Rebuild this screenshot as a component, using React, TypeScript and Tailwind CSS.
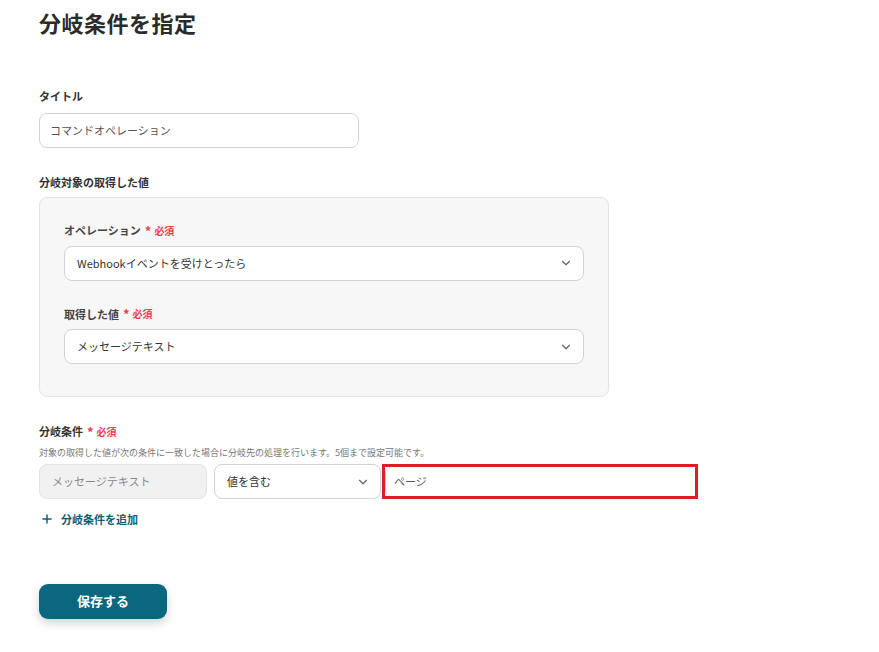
import { ChevronDown, Plus } from 'lucide-react';

const font = { fontFamily: '"Noto Sans CJK JP", "Noto Sans", sans-serif' };

function Required() {
  return (
    <span className="ml-1 inline-flex items-center text-[10px] font-bold text-[#e8414d]">
      <span className="mr-[3px] text-[13px] leading-none">*</span>必須
    </span>
  );
}

function SelectBox({ value, className }: { value: string; className?: string }) {
  return (
    <div
      className={`flex h-[35px] items-center justify-between rounded-[8px] border border-[#cfd3d8] bg-white pl-[12px] pr-[10px] text-[11px] text-[#333] ${className ?? ''}`}
    >
      <span>{value}</span>
      <ChevronDown size={14} strokeWidth={2} className="text-[#666]" />
    </div>
  );
}

export default function App() {
  return (
    <div style={font} className="min-h-[652px] w-[879px] bg-white pl-[39px] pt-[6px] text-[#333]">
      <h1 className="text-[22px] font-bold leading-[32px] tracking-[0.5px] text-[#2b2b2b]">分岐条件を指定</h1>

      <div className="mt-[50px] text-[11px] font-bold">タイトル</div>
      <div className="mt-[8px] flex h-[35px] w-[320px] items-center rounded-[8px] border border-[#cfd3d8] pl-[10px] text-[11px] text-[#555]">
        コマンドオペレーション
      </div>

      <div className="mt-[26px] text-[11px] font-bold">分岐対象の取得した値</div>
      <div className="mt-[7px] w-[570px] rounded-[8px] border border-[#e3e3e3] bg-[#f7f7f7] px-[24px] pb-[32px] pt-[24px]">
        <div className="flex items-center text-[11px] font-bold text-[#444]">
          オペレーション
          <Required />
        </div>
        <SelectBox value="Webhookイベントを受けとったら" className="mt-[7px]" />
        <div className="mt-[25px] flex items-center text-[11px] font-bold text-[#444]">
          取得した値
          <Required />
        </div>
        <SelectBox value="メッセージテキスト" className="mt-[7px]" />
      </div>

      <div className="mt-[26px] flex items-center text-[11px] font-bold">
        分岐条件
        <Required />
      </div>
      <div className="mt-[6px] text-[9px] text-[#777]">
        対象の取得した値が次の条件に一致した場合に分岐先の処理を行います。5個まで設定可能です。
      </div>
      <div className="mt-[5px] flex items-center">
        <div className="flex h-[35px] w-[168px] items-center rounded-[8px] border border-[#e3e3e3] bg-[#f1f1f1] pl-[12px] text-[11px] text-[#888]">
          メッセージテキスト
        </div>
        <SelectBox value="値を含む" className="ml-[7px] w-[167px]" />
        <div className="ml-[1px] flex h-[35px] w-[316px] items-center border-[3px] border-[#e01c24] bg-white">
          <div className="flex h-full w-full items-center rounded-l-[6px] border-l border-[#cfd3d8] pl-[8px] text-[11px] text-[#555]">
            ページ
          </div>
        </div>
      </div>

      <div className="mt-[12px] flex items-center text-[11px] font-bold text-[#0d5e73]">
        <Plus size={14} strokeWidth={2.5} className="ml-[1px] mr-[7px]" />
        分岐条件を追加
      </div>

      <button
        type="button"
        className="mt-[56px] flex h-[35px] w-[128px] items-center justify-center rounded-[9px] bg-[#0b6780] text-[13px] font-bold text-white shadow-[0_4px_10px_rgba(0,0,0,0.18)]"
      >
        保存する
      </button>
    </div>
  );
}
